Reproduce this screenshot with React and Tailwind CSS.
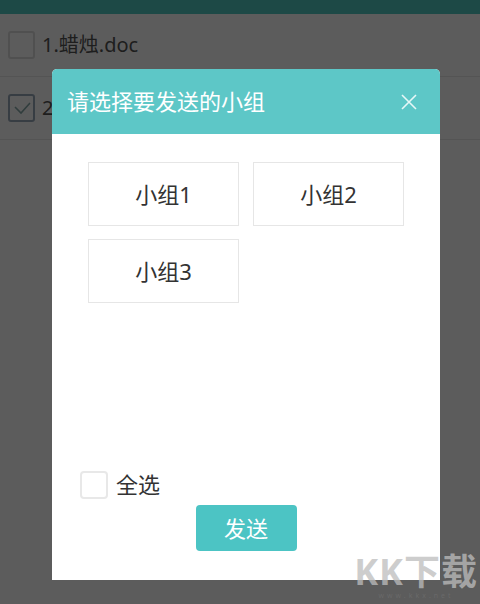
import React, { useState } from 'react';

const groups = ['小组1', '小组2', '小组3'];

const files = [
  { id: 1, name: '1.蜡烛.doc', checked: false },
  { id: 2, name: '2.蜡烛教案.doc', checked: true },
];

const App = () => {
  const [selected, setSelected] = useState([]);
  const [all, setAll] = useState(false);

  const toggle = (g) => {
    setSelected(prev => prev.includes(g) ? prev.filter(x => x !== g) : [...prev, g]);
  };

  return (
    <div
      className="relative w-[480px] h-[604px] overflow-hidden bg-white"
      style={{ fontFamily: '"Noto Sans", "Noto Sans CJK SC", sans-serif' }}
    >
      {/* Page under the dialog */}
      <div className="h-[14px] bg-[#52c9c3]"></div>
      {files.map(f => (
        <div key={f.id} className="h-[63px] flex items-center pl-2 gap-[7px] border-b border-[#e8e8e8]">
          <div className={`w-[27px] h-[28px] rounded-[3px] border-2 flex items-center justify-center ${f.checked ? 'border-[#9ab]' : 'border-[#ddd]'}`}>
            {f.checked && (
              <svg width="20" height="20" viewBox="0 0 20 20" fill="none" stroke="#8aa" strokeWidth="1.6">
                <path d="M3 9 L9 15 L18 5" />
              </svg>
            )}
          </div>
          <span className="text-[20px] text-[#555] whitespace-nowrap">{f.name}</span>
        </div>
      ))}

      {/* Overlay */}
      <div className="absolute inset-0 bg-black/[0.64]"></div>

      {/* Dialog */}
      <div className="absolute left-[52px] top-[69px] w-[388px] h-[511px] bg-white rounded-t-[5px] flex flex-col">
        <div className="h-[65px] bg-[#5dc7c7] rounded-t-[5px] flex items-center justify-between pl-[15px] pr-[23px]">
          <span className="text-[22px] text-white">请选择要发送的小组</span>
          <svg width="16" height="16" viewBox="0 0 16 16" stroke="#e6f7f7" strokeWidth="1.6" fill="none">
            <path d="M1 1 L15 15 M15 1 L1 15" />
          </svg>
        </div>

        <div className="flex-1 pt-[28px] pl-[36px]">
          <div className="grid grid-cols-[151px_151px] gap-x-[14px] gap-y-[13px]">
            {groups.map(g => (
              <button
                key={g}
                onClick={() => toggle(g)}
                className={`h-[64px] border text-[22px] text-[#333] flex items-center justify-center ${selected.includes(g) ? 'border-[#5dc7c7]' : 'border-[#e6e6e6]'}`}
              >
                {g}
              </button>
            ))}
          </div>
        </div>

        <div className="pl-[28px] flex items-center gap-[8px]">
          <button
            onClick={() => setAll(!all)}
            className="w-[28px] h-[28px] rounded-[4px] border-2 border-[#e8e8e8]"
          ></button>
          <span className="text-[22px] text-[#333]">全选</span>
        </div>
        <div className="flex justify-center pt-[4px] pb-[29px]">
          <button className="w-[101px] h-[46px] rounded-[4px] bg-[#4cc4c4] text-white text-[22px]">发送</button>
        </div>
      </div>

      {/* Watermark */}
      <div className="absolute right-[2px] bottom-[2px] flex flex-col items-center pointer-events-none">
        <span className="text-[36px] leading-[36px] font-bold text-[#bdbdbd]/75 tracking-[1px]">KK下载</span>
        <span className="text-[7px] leading-[12px] text-[#777]/50 tracking-[3px]">www.kkx.net</span>
      </div>
    </div>
  );
};

export default App;
